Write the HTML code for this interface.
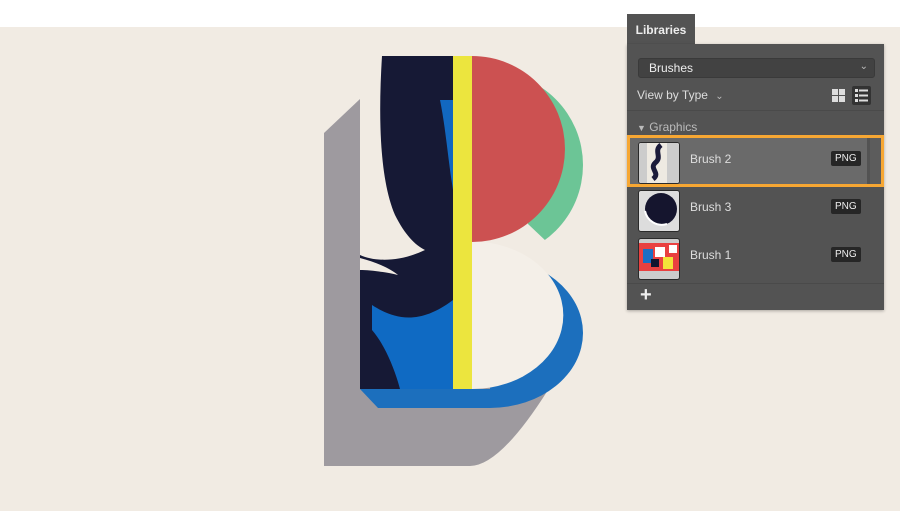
<!DOCTYPE html>
<html><head><style>
body{margin:0;width:900px;height:511px;overflow:hidden;background:#fff;font-family:"Liberation Sans",sans-serif;position:relative}
.bg{position:absolute;left:0;top:27px;width:900px;height:484px;background:#f1ebe3}
.abs{position:absolute}
.panel{left:627px;top:44px;width:257px;height:266px;background:#535353;box-shadow:0 1px 3px rgba(0,0,0,.3)}
.tab{left:627px;top:14px;width:68px;height:31px;background:#535353;color:#eee;font-weight:bold;font-size:12px;line-height:32px;text-align:center}
.row{position:absolute;left:0;width:257px;height:48px}
.thumb{position:absolute;left:11px;top:5px;width:40px;height:40px;border:1px solid #2a2a2a;border-radius:3px;overflow:hidden;background:#ccc}
.name{position:absolute;left:63px;top:15px;color:#ddd;font-size:12px}
.png{position:absolute;left:204px;top:14px;background:#262626;color:#eee;font-size:10px;padding:2px 4px;border-radius:2px}
</style></head><body>
<div class="bg"></div>
<svg class="abs" style="left:0;top:0" width="900" height="511">
<defs><clipPath id="gc"><path d="M528 50 H620 V242 H547 L528 224 Z"/></clipPath></defs>
<path d="M324 133 L360 99 L548 390 Q500 466 470 466 L324 466 Z" fill="#9e9a9f"/>
<path d="M490 258 A93 75 0 0 1 490 408 Z" fill="#1c6fbd"/>
<path d="M360 389 L378 408 L490 408 L490 389 Z" fill="#1c6fbd"/>
<circle cx="490" cy="165" r="93" fill="#6cc596" clip-path="url(#gc)"/>
<path d="M472 241.5 A91 73.5 0 0 1 472 389 Z" fill="#f4efe8"/>
<path d="M472 56 A93 93 0 0 1 472 242 Z" fill="#cc5151"/>
<rect x="360" y="56" width="93" height="333" fill="#161935"/>
<path d="M360 56 H382 C378 120 380 180 395 215 C405 235 415 245 425 250 C400 262 375 262 360 255 Z" fill="#f1ebe3"/>
<path d="M360 258 C375 262 390 268 398 275 C385 272 370 270 360 270 Z" fill="#f1ebe3"/>
<path d="M372 305 C395 320 420 325 453 300 V389 H400 C395 370 385 345 372 330 Z" fill="#0f6ac3"/>
<path d="M440 100 C446 130 448 160 453 190 V100 Z" fill="#1268c0"/>
<rect x="453" y="56" width="19" height="333" fill="#ece53e"/>
</svg>
<div class="abs tab">Libraries</div>
<div class="abs panel">
  <div class="abs" style="left:11px;top:14px;height:18px;background:#424242;border:1px solid #3a3a3a;border-radius:3px;color:#eee;font-size:12px;line-height:18px;padding-left:10px;width:225px">Brushes<span style="position:absolute;right:6px;top:-1px;color:#bbb;font-size:10px">&#8964;</span></div>
  <div class="abs" style="left:10px;top:44px;color:#ddd;font-size:12px">View by Type <span style="color:#bbb;font-size:10px;margin-left:4px">&#8964;</span></div>
  <svg class="abs" style="left:205px;top:42px" width="45" height="20">
    <rect x="0" y="3" width="6" height="6" fill="#ddd"/><rect x="7" y="3" width="6" height="6" fill="#ddd"/><rect x="0" y="10" width="6" height="6" fill="#ddd"/><rect x="7" y="10" width="6" height="6" fill="#ddd"/>
    <rect x="20" y="0" width="19" height="19" rx="2" fill="#333"/>
    <rect x="23" y="3" width="3" height="3" fill="#ddd"/><rect x="27" y="3.5" width="9" height="2" fill="#ddd"/>
    <rect x="23" y="8" width="3" height="3" fill="#ddd"/><rect x="27" y="8.5" width="9" height="2" fill="#ddd"/>
    <rect x="23" y="13" width="3" height="3" fill="#ddd"/><rect x="27" y="13.5" width="9" height="2" fill="#ddd"/>
  </svg>
  <div class="abs" style="left:0;top:66px;width:257px;height:1px;background:#4a4a4a"></div>
  <div class="abs" style="left:10px;top:76px;color:#bbb;font-size:12px"><span style="font-size:9px">&#9660;</span> Graphics</div>
  <div class="row" style="top:93px;background:#6a6a6a;width:240px"><div class="abs" style="right:-17px;top:0;width:14px;height:48px;background:#5c5c5c"></div>
    <div class="thumb" style="background:#eeeae2"><svg width="40" height="40"><rect x="0" width="8" height="40" fill="#ccc"/><rect x="28" width="12" height="40" fill="#ccc"/><path d="M22 2 C14 8 24 14 16 20 C10 26 22 30 14 36" stroke="#1b1b3a" stroke-width="5" fill="none"/></svg></div>
    <div class="name">Brush 2</div><div class="png">PNG</div></div>
  <div class="abs" style="left:0;top:91px;width:257px;height:52px;box-sizing:border-box;border:3px solid #f7a733"></div>
  <div class="row" style="top:141px"><div class="thumb" style="background:#ddd"><svg width="40" height="40"><circle cx="22" cy="18" r="16" fill="#15152e"/><path d="M6 20 C8 30 18 36 28 33" stroke="#fff" stroke-width="2" fill="none"/></svg></div><div class="name">Brush 3</div><div class="png">PNG</div></div>
  <div class="row" style="top:189px"><div class="thumb" style="background:#ccc"><svg width="40" height="40"><rect y="4" width="40" height="28" fill="#e94040"/><rect x="4" y="10" width="10" height="14" fill="#1a6fc4"/><rect x="16" y="8" width="10" height="10" fill="#fff"/><rect x="24" y="18" width="10" height="12" fill="#f3e23a"/><rect x="12" y="20" width="8" height="8" fill="#13152f"/><rect x="30" y="6" width="8" height="8" fill="#fff"/></svg></div><div class="name">Brush 1</div><div class="png">PNG</div></div>
  <div class="abs" style="left:0;top:239px;width:257px;height:1px;background:#4a4a4a"></div>
  <div class="abs" style="left:13px;top:240px;color:#eee;font-size:20px;font-weight:bold">+</div>
</div>
</body></html>
